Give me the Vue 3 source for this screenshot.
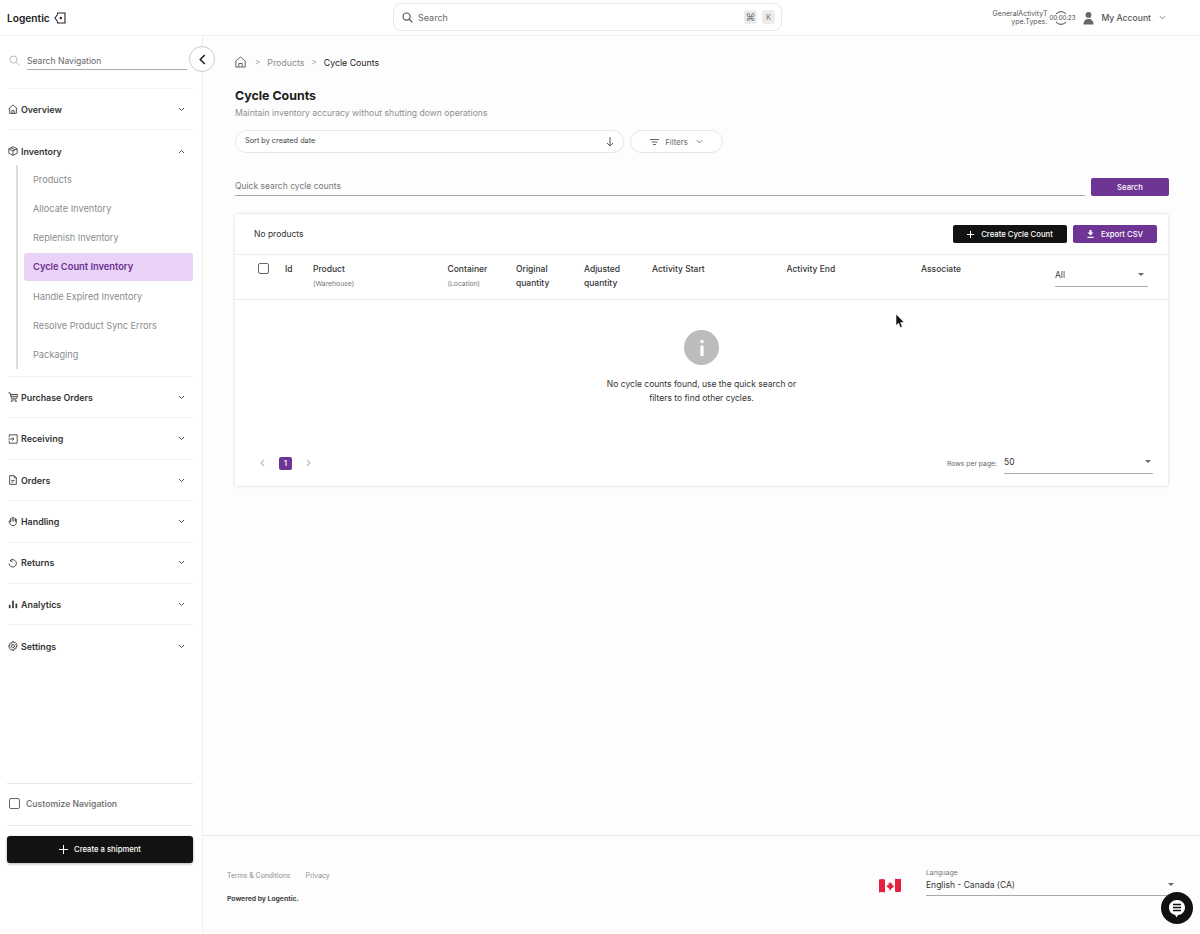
<template>
  <div class="page">
    <header class="topbar">
      <div class="logo">
        <span>Logentic</span>
        <svg width="12" height="12" viewBox="0 0 12 12" fill="none" stroke="#222" stroke-width="1.1">
          <path d="M3.500 2.500V1h7.500v10H3.500V9.500" />
          <path d="M3.500 2.500 1 6l2.500 3.500" />
          <circle cx="6.800" cy="6" r="1.200" fill="#222" stroke="none" />
        </svg>
      </div>
      <div class="global-search">
        <svg width="11" height="11" viewBox="0 0 14 14" fill="none" stroke="#555" stroke-width="1.500">
          <circle cx="5.800" cy="5.800" r="4.500" />
          <path d="m9.200 9.200 4 4" />
        </svg>
        <span class="gs-label">Search</span>
        <span class="kbd">⌘</span>
        <span class="kbd small">K</span>
      </div>
      <div class="account">
        <div class="activity">GeneralActivityT<br />ype.Types.</div>
        <div class="timer">
          <svg width="16" height="18" viewBox="0 0 16 18" fill="none" stroke="#444" stroke-width="1">
            <path d="M3 5a6.500 6.500 0 0 1 10 0" />
            <path d="M3 13a6.500 6.500 0 0 0 10 0" />
          </svg>
          <span>00:00:23</span>
        </div>
        <svg class="avatar" width="11" height="14" viewBox="0 0 12 14" fill="#666">
          <circle cx="6" cy="3.600" r="3.200" />
          <path d="M0.500 14c0-4 2.200-6 5.500-6s5.500 2 5.500 6z" />
        </svg>
        <span class="acc-name">My Account</span>
        <svg width="7" height="5" viewBox="0 0 8 5" fill="none" stroke="#777" stroke-width="1"><path d="m1 1 3 3 3-3" /></svg>
      </div>
    </header>

    <div class="body">
      <aside class="sidebar">
        <div class="nav-search">
          <svg width="11" height="11" viewBox="0 0 14 14" fill="none" stroke="#b5b5b5" stroke-width="1.200">
            <circle cx="5.800" cy="5.800" r="4.500" />
            <path d="m9.200 9.200 4 4" />
          </svg>
          <div class="nav-input">Search Navigation</div>
        </div>
        <button class="collapse">
          <svg width="7" height="11" viewBox="0 0 7 11" fill="none" stroke="#222" stroke-width="1.600"><path d="M5.800 1 1.300 5.500l4.500 4.500" /></svg>
        </button>

        <nav class="nav">
          <template v-for="item in navItems" :key="item.label">
            <div class="nav-head">
              <span class="nav-icon" v-html="item.icon"></span>
              <span class="nav-label">{{ item.label }}</span>
              <svg class="chev" width="7" height="5" viewBox="0 0 7 5" fill="none" stroke="#555" stroke-width="1">
                <path :d="item.open ? 'm1 4 2.500-2.500L6 4' : 'm1 1 2.500 2.500L6 1'" />
              </svg>
            </div>
            <div v-if="item.children" class="sub">
              <div
                v-for="child in item.children"
                :key="child"
                class="sub-item"
                :class="{ active: child === 'Cycle Count Inventory' }"
              >{{ child }}</div>
            </div>
          </template>
        </nav>

        <div class="side-bottom">
          <div class="customize">
            <span class="check"></span>
            <span>Customize Navigation</span>
          </div>
          <button class="ship-btn">
            <svg width="9" height="9" viewBox="0 0 9 9" stroke="#fff" stroke-width="1"><path d="M4.500 0v9M0 4.500h9" /></svg>
            Create a shipment
          </button>
        </div>
      </aside>

      <main class="main">
        <div class="content">
          <div class="crumbs">
            <svg class="home" width="11" height="12" viewBox="0 0 11 12" fill="none" stroke="#666" stroke-width="1">
              <path d="M.8 5 5.500 1l4.700 4v6H.8z" />
              <path d="M3.800 11V7.500h3.400V11" />
            </svg>
            <span class="sep">&gt;</span>
            <span class="crumb">Products</span>
            <span class="sep">&gt;</span>
            <span class="crumb current">Cycle Counts</span>
          </div>

          <h1>Cycle Counts</h1>
          <p class="sub-title">Maintain inventory accuracy without shutting down operations</p>

          <div class="filters">
            <div class="sort-pill">
              <span class="sort-label">Sort by created date</span>
              <svg width="8" height="10" viewBox="0 0 8 10" fill="none" stroke="#555" stroke-width="1"><path d="M4 0v9M1 6l3 3 3-3" /></svg>
            </div>
            <div class="filter-pill">
              <svg width="9" height="6" viewBox="0 0 9 6" stroke="#666" stroke-width="1"><path d="M0 .5h9M1.500 3h6M3 5.500h3" /></svg>
              <span>Filters</span>
              <svg class="filter-chev" width="7" height="5" viewBox="0 0 8 5" fill="none" stroke="#666" stroke-width="1"><path d="m1 1 3 3 3-3" /></svg>
            </div>
          </div>

          <div class="quick">
            <div class="quick-input">Quick search cycle counts</div>
            <button class="btn purple search-btn">Search</button>
          </div>

          <section class="card">
            <div class="card-top">
              <span class="count">No products</span>
              <div class="actions">
                <button class="btn dark create">
                  <svg width="7" height="7" viewBox="0 0 7 7" stroke="#fff" stroke-width="1"><path d="M3.500 0v7M0 3.500h7" /></svg>
                  Create Cycle Count
                </button>
                <button class="btn purple export">
                  <svg width="7" height="8" viewBox="0 0 7 8" fill="#fff"><path d="M2.500 0h2v2.500h2L3.500 5.500.5 2.500h2zM.5 6.800h6V8h-6z" /></svg>
                  Export CSV
                </button>
              </div>
            </div>

            <div class="thead">
              <span class="check"></span>
              <div v-for="col in columns" :key="col.title" class="th">
                <div class="th-title">{{ col.title }}</div>
                <div v-if="col.hint" class="th-hint">{{ col.hint }}</div>
              </div>
              <div class="all-select">
                <span>All</span>
                <i class="caret"></i>
              </div>
            </div>

            <div class="empty">
              <div class="info-icon">
                <svg width="4" height="16" viewBox="0 0 4 16" fill="#fff">
                  <rect x=".4" width="3.200" height="3" rx=".8" />
                  <rect x=".4" y="5.500" width="3.200" height="10.500" rx=".6" />
                </svg>
              </div>
              <p>No cycle counts found, use the quick search or<br />filters to find other cycles.</p>
            </div>

            <div class="pager">
              <div class="pages">
                <svg width="5" height="8" viewBox="0 0 5 8" fill="none" stroke="#bbb" stroke-width="1.200"><path d="M4 1 1 4l3 3" /></svg>
                <span class="page-num">1</span>
                <svg width="5" height="8" viewBox="0 0 5 8" fill="none" stroke="#bbb" stroke-width="1.200"><path d="m1 1 3 3-3 3" /></svg>
              </div>
              <div class="rows">
                <span class="rows-label">Rows per page:</span>
                <div class="rows-select">
                  <span>50</span>
                  <i class="caret"></i>
                </div>
              </div>
            </div>
          </section>
        </div>

        <footer class="footer">
          <div class="foot-left">
            <div class="foot-links">
              <span>Terms &amp; Conditions</span>
              <span>Privacy</span>
            </div>
            <div class="powered">Powered by Logentic.</div>
          </div>
          <div class="foot-right">
            <svg class="flag" width="22" height="15" viewBox="0 0 22 15">
              <path d="M0 1.500c2-.8 4-.8 6 0v13c-2-.8-4-.8-6 0z" fill="#e5213f" />
              <path d="M6 1.500h10v13H6z" fill="#fff" />
              <path d="M16 .5c2 .8 4 .8 6 0v13c-2 .8-4 .8-6 0z" fill="#e5213f" />
              <path d="m11 3.500 1 2 1.300-.6-.4 2.400 1.600-.6-.3 1.300 1 .5-2.700 2-.4 1H11.500v1h-1v-1l-.4-1-2.700-2 1-.5-.3-1.300 1.600.6-.4-2.400 1.300.6z" fill="#e5213f" />
            </svg>
            <div class="lang">
              <label>Language</label>
              <div class="lang-select">
                <span>English - Canada (CA)</span>
                <i class="caret"></i>
              </div>
            </div>
          </div>
        </footer>
      </main>
    </div>

    <svg class="cursor" width="10" height="15" viewBox="0 0 10 15">
      <path d="M1 0v11.500l2.600-2.300 1.700 4.300 2-.8-1.700-4.200H9.200z" fill="#111" stroke="#fff" stroke-width=".6" />
    </svg>

    <button class="chat">
      <svg width="18" height="19" viewBox="0 0 18 19">
        <path d="M9 1c4.500 0 8 3.200 8 7.500S13.500 16 10 16l-1.500 2.500L7 15.800C3.500 15.200 1 12.500 1 8.500 1 4.200 4.500 1 9 1z" fill="#fff" />
        <path d="M5 5.500h8M5 8.500h8M5 11.500h8" stroke="#111" stroke-width="1.500" />
      </svg>
    </button>
  </div>
</template>

<script setup>
const icon = (body) =>
  `<svg width="10" height="10" viewBox="0 0 12 12" fill="none" stroke="#333" stroke-width="1">${body}</svg>`

const navItems = [
  { label: 'Overview', icon: icon('<path d="M.7 6 6 1l5.300 5M2 5v6.300h8V5M4.700 11.300V8h2.600v3.300"/>') },
  {
    label: 'Inventory',
    open: true,
    icon: icon('<path d="M6 .8 11 3.400v5.200L6 11.200 1 8.600V3.400zM1 3.400 6 6l5-2.600M6 6v5.200M3.500 2.100l5 2.600"/>'),
    children: [
      'Products',
      'Allocate Inventory',
      'Replenish Inventory',
      'Cycle Count Inventory',
      'Handle Expired Inventory',
      'Resolve Product Sync Errors',
      'Packaging',
    ],
  },
  { label: 'Purchase Orders', icon: icon('<path d="M.5 1h2l1.500 6.500h6.500L11.500 3H3M3.500 5.200h7M4 9.500h6"/><circle cx="4.500" cy="11" r=".6"/><circle cx="9.500" cy="11" r=".6"/>') },
  { label: 'Receiving', icon: icon('<path d="M1.500 4V1h9.500v10H1.500V8M.5 6h6.500M5 4l2 2-2 2"/>') },
  { label: 'Orders', icon: icon('<path d="M2 .8h5.500L10 3.300v7.900H2zM7.500.8v2.500H10M4 6.500h4M4 8.500h2.500"/>') },
  { label: 'Handling', icon: icon('<path d="M3 7V3M5 6V1.500M7 6V1.500M9 6.500V3M2.500 6c-.5-.4-1.200-.3-1.500.2L2.700 10c.7 1.100 1.800 1.500 3.300 1.500 2.300 0 4-1.300 4-3.800V4" stroke-linecap="round"/>') },
  { label: 'Returns', icon: icon('<path d="M2.600 3.300a4.400 4.400 0 1 1-1.300 3.200M2.600 3.300 5.300 1M2.600 3.300 5.500 5"/>') },
  { label: 'Analytics', icon: '<svg width="10" height="10" viewBox="0 0 12 12" fill="#333"><rect x="1" y="7" width="2" height="4"/><rect x="5" y="2" width="2" height="9"/><rect x="9" y="5.500" width="2" height="5.500"/></svg>' },
  { label: 'Settings', icon: icon('<circle cx="6" cy="6" r="1.800"/><path d="M5 .8h2l.3 1.600 1.400-.8 1.400 1.400-.8 1.400 1.600.3v2l-1.600.3.8 1.400-1.400 1.400-1.400-.8L7 11.200H5l-.3-1.600-1.400.8-1.400-1.400.8-1.400L1 7.300v-2l1.600-.3-.8-1.400 1.400-1.400 1.400.8z"/>') },
]

const columns = [
  { title: 'Id' },
  { title: 'Product', hint: '(Warehouse)' },
  { title: 'Container', hint: '(Location)' },
  { title: 'Original quantity' },
  { title: 'Adjusted quantity' },
  { title: 'Activity Start' },
  { title: 'Activity End' },
  { title: 'Associate' },
]
</script>

<style>
html,
body {
  margin: 0;
  background: #fff;
}
</style>

<style scoped>
* {
  box-sizing: border-box;
}

.page {
  position: relative;
  width: 1200px;
  height: 934px;
  overflow: hidden;
  font-family: Inter, "Noto Sans", "Liberation Sans", sans-serif;
  color: #222;
  background: #fff;
}

.topbar {
  height: 36px;
  display: flex;
  align-items: center;
  padding: 0 34px 0 7px;
  border-bottom: 1px solid #f0f0f0;
  position: relative;
}

.logo {
  display: flex;
  align-items: center;
  gap: 4px;
  font-size: 10.200px;
  font-weight: 600;
  color: #222;
}

.global-search {
  position: absolute;
  left: 393px;
  top: 3px;
  width: 389px;
  height: 28px;
  display: flex;
  align-items: center;
  gap: 5px;
  padding: 0 6px 0 8px;
  background: #fff;
  border: 1px solid #e8e8e8;
  border-radius: 8px;
}

.gs-label {
  flex: 1;
  font-size: 9px;
  color: #666;
}

.kbd {
  width: 13px;
  height: 14px;
  background: #ececec;
  border-radius: 3px;
  font-size: 10px;
  color: #777;
  display: flex;
  align-items: center;
  justify-content: center;
}

.kbd.small {
  font-size: 7.500px;
}

.account {
  margin-left: auto;
  display: flex;
  align-items: center;
  color: #444;
}

.activity {
  font-size: 7px;
  line-height: 8px;
  text-align: right;
  width: 60px;
  color: #555;
}

.timer {
  position: relative;
  width: 24px;
  height: 18px;
  margin-left: 2px;
  display: flex;
  justify-content: center;
}

.timer span {
  position: absolute;
  top: 5px;
  left: 0;
  font-size: 6px;
  line-height: 8px;
  white-space: nowrap;
}

.avatar {
  margin-left: 10px;
}

.acc-name {
  margin: 0 8px 0 7px;
  font-size: 8.600px;
  color: #555;
  font-weight: 500;
}

.body {
  display: flex;
  height: 898px;
}

.sidebar {
  position: relative;
  width: 203px;
  flex-shrink: 0;
  display: flex;
  flex-direction: column;
  padding: 0 9px 70px 8px;
  border-right: 1px solid #efefef;
}

.nav-search {
  display: flex;
  align-items: center;
  gap: 7px;
  height: 53px;
  padding: 16px 0 19px 1px;
  border-bottom: 1px solid #f3f3f3;
}

.nav-input {
  width: 160px;
  height: 18px;
  line-height: 18px;
  font-size: 8.600px;
  color: #666;
  border-bottom: 1px solid #aaa;
}

.collapse {
  position: absolute;
  left: 189px;
  top: 10px;
  width: 26px;
  height: 26px;
  padding: 0;
  display: flex;
  align-items: center;
  justify-content: center;
  background: #fff;
  border: 1px solid #ccc;
  border-radius: 50%;
  z-index: 2;
}

.nav-head {
  height: 41.400px;
  display: flex;
  align-items: center;
  gap: 3px;
  padding-right: 8px;
  border-bottom: 1px solid #f1f1f1;
}

.nav-head:last-child,
.nav-head:has(+ .sub) {
  border-bottom: none;
}

.nav-icon {
  display: flex;
  width: 10px;
  height: 10px;
}

.nav-label {
  flex: 1;
  font-size: 8.900px;
  font-weight: 600;
  color: #333;
}

.chev {
  flex-shrink: 0;
}

.sub {
  margin-top: -7px;
  padding-left: 8px;
  border-bottom: 1px solid #f1f1f1;
  padding-bottom: 7px;
  position: relative;
}

.sub::before {
  content: "";
  position: absolute;
  left: 8px;
  top: 0;
  bottom: 7px;
  width: 2px;
  background: #dcdcdc;
}

.sub-item {
  height: 29.200px;
  margin-left: 8px;
  padding-left: 9px;
  display: flex;
  align-items: center;
  font-size: 9.200px;
  color: #8c8c8c;
  border-radius: 3px;
}

.sub-item.active {
  height: 27.200px;
  margin-top: 1px;
  margin-bottom: 1px;
  background: #e8d2f6;
  color: #6b2f91;
  font-weight: 600;
  font-size: 9.300px;
}

.side-bottom {
  position: absolute;
  left: 7px;
  right: 9px;
  bottom: 71px;
}

.customize {
  height: 43px;
  display: flex;
  align-items: center;
  gap: 6px;
  padding: 0 0 2px 2px;
  font-size: 8.600px;
  font-weight: 600;
  color: #777;
  border-top: 1px solid #e6e6e6;
  border-bottom: 1px solid #e6e6e6;
}

.check {
  display: block;
  width: 11px;
  height: 11px;
  border: 1.300px solid #666;
  border-radius: 2px;
  flex-shrink: 0;
}

.ship-btn {
  width: 186px;
  height: 27px;
  margin-top: 10px;
  display: flex;
  align-items: center;
  justify-content: center;
  gap: 6px;
  padding: 0;
  background: #121212;
  color: #fff;
  border: none;
  border-radius: 3px;
  font: 500 7.700px Inter, sans-serif;
  box-shadow: 0 1px 3px rgba(0, 0, 0, .3);
}

.main {
  flex: 1;
  min-width: 0;
  display: flex;
  flex-direction: column;
  background: #fdfdfd;
}

.content {
  flex: 1;
  padding: 20px 32px 0;
}

.crumbs {
  display: flex;
  align-items: center;
  height: 12px;
  gap: 7px;
  font-size: 8.800px;
}

.home {
  margin-right: 2px;
}

.crumb {
  color: #8a8a8a;
}

.crumb.current {
  color: #222;
}

.sep {
  color: #999;
  font-size: 8px;
}

h1 {
  margin: 20px 0 0;
  font-size: 12.400px;
  font-weight: 700;
  line-height: 16px;
  color: #1c1c1c;
}

.sub-title {
  margin: 3px 0 0;
  font-size: 8.600px;
  line-height: 12px;
  color: #8f8f8f;
}

.filters {
  display: flex;
  gap: 6px;
  margin-top: 11px;
}

.sort-pill,
.filter-pill {
  height: 23px;
  display: flex;
  align-items: center;
  background: #fff;
  border: 1px solid #e6e6e6;
  border-radius: 12px;
}

.sort-pill {
  width: 389px;
  padding: 0 9px 0 9px;
  justify-content: space-between;
  font-size: 7.300px;
  color: #444;
}

.sort-label {
  margin-bottom: 2px;
}

.filter-pill {
  width: 93px;
  justify-content: center;
  gap: 6px;
  font-size: 7.800px;
  color: #666;
}

.filter-chev {
  margin-left: 2px;
}

.quick {
  display: flex;
  align-items: center;
  gap: 6px;
  margin: 25px -1px 0 0;
}

.quick-input {
  flex: 1;
  height: 18px;
  line-height: 16px;
  font-size: 8.500px;
  color: #777;
  border-bottom: 1px solid #aaa;
}

.btn {
  height: 18px;
  padding: 0;
  display: flex;
  align-items: center;
  justify-content: center;
  gap: 7px;
  color: #fff;
  border: none;
  border-radius: 2px;
  font: 500 7.700px Inter, sans-serif;
}

.purple {
  background: #6f3595;
}

.dark {
  background: #121212;
}

.search-btn {
  width: 78px;
}

.card {
  margin-top: 18px;
  height: 272px;
  display: flex;
  flex-direction: column;
  background: #fff;
  border-radius: 2px;
  box-shadow: 0 0 3px rgba(0, 0, 0, .18);
}

.card-top {
  height: 41px;
  display: flex;
  align-items: center;
  justify-content: space-between;
  padding: 0 11px 0 19px;
  border-bottom: 1px solid #ececec;
}

.count {
  font-size: 8.500px;
  color: #333;
}

.actions {
  display: flex;
  gap: 6px;
}

.create {
  width: 114px;
}

.export {
  width: 84px;
}

.thead {
  height: 45px;
  display: grid;
  grid-template-columns: 27px 28px 134.500px 68.500px 68px 68px 134.500px 134.500px 134px 1fr;
  padding: 8px 0 0 23px;
  border-bottom: 1px solid #ececec;
}

.th-title {
  font-size: 8.500px;
  font-weight: 500;
  line-height: 13.500px;
  color: #333;
}

.th:nth-of-type(4) .th-title,
.th:nth-of-type(5) .th-title {
  width: 50px;
}

.th-hint {
  font-size: 6.800px;
  line-height: 13px;
  color: #777;
}

.all-select {
  width: 93px;
  height: 26px;
  margin-top: -2px;
  padding: 2px 4px 0 0;
  display: flex;
  align-items: center;
  justify-content: space-between;
  font-size: 8.500px;
  color: #444;
  border-bottom: 1px solid #aaa;
}

.caret {
  width: 0;
  height: 0;
  border-left: 3px solid transparent;
  border-right: 3px solid transparent;
  border-top: 3px solid #666;
}

.empty {
  flex: 1;
  display: flex;
  flex-direction: column;
  align-items: center;
  padding-top: 30px;
}

.info-icon {
  width: 35px;
  height: 35px;
  display: flex;
  align-items: center;
  justify-content: center;
  border-radius: 50%;
  background: #bcbcbc;
}

.empty p {
  margin: 12px 0 0;
  font-size: 8.500px;
  line-height: 14px;
  text-align: center;
  color: #333;
}

.pager {
  height: 36px;
  flex-shrink: 0;
  display: flex;
  justify-content: space-between;
  padding: 0 15px 0 25px;
  align-items: flex-start;
}

.pages {
  display: flex;
  align-items: center;
  gap: 14px;
  height: 14px;
  margin-top: 6px;
}

.page-num {
  width: 13px;
  height: 13px;
  line-height: 13px;
  border-radius: 2px;
  background: #6f3595;
  color: #fff;
  text-align: center;
  font-size: 7px;
  font-weight: 600;
}

.rows {
  display: flex;
  align-items: flex-start;
  gap: 7px;
}

.rows-label {
  margin-top: 9px;
  font-size: 6.800px;
  color: #666;
}

.rows-select {
  width: 149px;
  height: 22px;
  padding: 0 2px 2px 0;
  margin-top: 2px;
  display: flex;
  align-items: center;
  justify-content: space-between;
  font-size: 8.500px;
  color: #333;
  border-bottom: 1px solid #aaa;
}

.footer {
  height: 99px;
  flex-shrink: 0;
  display: flex;
  justify-content: space-between;
  padding: 35px 26px 0 24px;
  border-top: 1px solid #ececec;
}

.foot-links {
  display: flex;
  gap: 15px;
  font-size: 6.900px;
  line-height: 9px;
  color: #8f8f8f;
}

.powered {
  margin-top: 14px;
  font-size: 6.800px;
  font-weight: 700;
  line-height: 9px;
  color: #444;
}

.foot-right {
  display: flex;
  align-items: flex-start;
  gap: 25px;
}

.flag {
  margin-top: 7px;
}

.lang {
  width: 248px;
  margin-top: -2px;
}

.lang label {
  display: block;
  font-size: 6.800px;
  line-height: 8px;
  color: #777;
}

.lang-select {
  height: 19px;
  padding-bottom: 3px;
  display: flex;
  align-items: center;
  justify-content: space-between;
  font-size: 8.500px;
  color: #333;
  border-bottom: 1px solid #aaa;
}

.cursor {
  position: absolute;
  left: 895px;
  top: 314px;
}

.chat {
  position: absolute;
  left: 1161px;
  top: 892px;
  width: 32px;
  height: 32px;
  padding: 0;
  display: flex;
  align-items: center;
  justify-content: center;
  background: #111;
  border: none;
  border-radius: 50%;
}
</style>
